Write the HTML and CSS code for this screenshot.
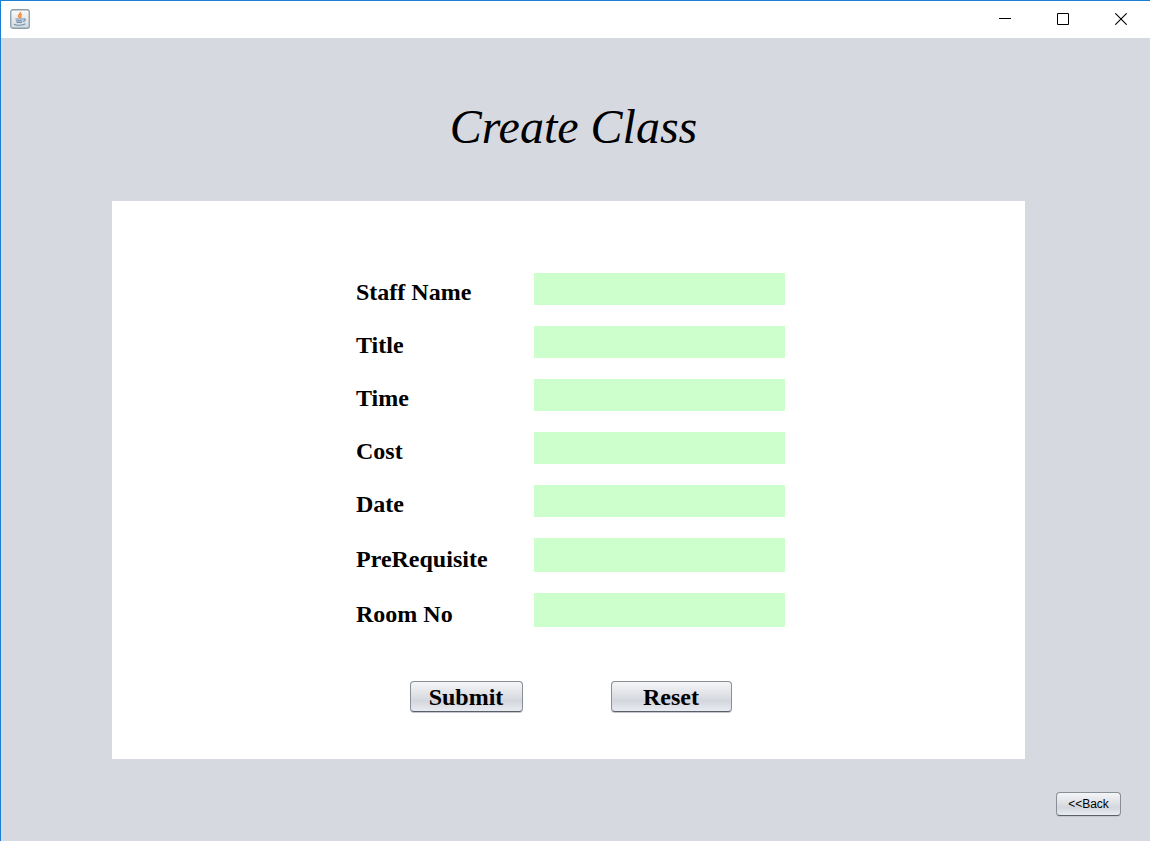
FILE: index.html
```html
<!DOCTYPE html>
<html lang="en">
<head>
<meta charset="utf-8">
<title>Create Class</title>
<link rel="stylesheet" href="styles.css">
</head>
<body>
<div class="window">
  <header class="titlebar">
    <svg class="app-icon" width="20" height="20" viewBox="0 0 20 20" aria-hidden="true">
      <defs>
        <linearGradient id="tile" x1="0" y1="0" x2="0" y2="1">
          <stop offset="0" stop-color="#fafafa"/>
          <stop offset="1" stop-color="#d3dae0"/>
        </linearGradient>
      </defs>
      <rect x="0.75" y="0.75" width="18.5" height="18.5" rx="2" fill="url(#tile)" stroke="#8b9dab" stroke-width="1.300"/>
      <path d="M10.500 3c.8 1.600-2.600 2.700-2 4.200.2.700 1 1.200 1.300 1.800M12 5.400c-1.500.6-2 1.400-1.300 2.200.4.500.1 1-.3 1.300" fill="none" stroke="#ee8b3c" stroke-width="1.500"/>
      <path d="M5.300 10h8M6 11.800h6.500M6.600 13.500h5.400M13.300 10c2.800-.8 2.500 1.900-.2 2.600M4 15.200c2 1.500 9 1.400 11.500-.4" fill="none" stroke="#6c8fae" stroke-width="1.200"/>
    </svg>
    <div class="window-controls">
      <button class="window-button" type="button" aria-label="Minimize">
        <svg width="12" height="12" viewBox="0 0 12 12" shape-rendering="crispEdges"><path d="M0 5.500h12" stroke="#000"/></svg>
      </button>
      <button class="window-button" type="button" aria-label="Maximize">
        <svg width="12" height="12" viewBox="0 0 12 12"><path d="M.5.500h11v11H.5z" fill="none" stroke="#000"/></svg>
      </button>
      <button class="window-button" type="button" aria-label="Close">
        <svg width="12" height="12" viewBox="0 0 12 12"><path d="M.3.300l11.400 11.400M11.700.300L.3 11.700" stroke="#000" stroke-width="1.100"/></svg>
      </button>
    </div>
  </header>
  <main class="content">
    <h1 class="heading">Create Class</h1>
    <form class="panel">
      <div class="fields">
        <label class="label" for="staff">Staff Name</label><input class="field" id="staff" type="text">
        <label class="label" for="title">Title</label><input class="field" id="title" type="text">
        <label class="label" for="time">Time</label><input class="field" id="time" type="text">
        <label class="label" for="cost">Cost</label><input class="field" id="cost" type="text">
        <label class="label" for="date">Date</label><input class="field" id="date" type="text">
        <label class="label" for="prereq">PreRequisite</label><input class="field" id="prereq" type="text">
        <label class="label" for="room">Room No</label><input class="field" id="room" type="text">
      </div>
      <div class="actions">
        <button class="button button-submit" type="submit">Submit</button>
        <button class="button button-reset" type="reset">Reset</button>
      </div>
    </form>
    <footer class="footer">
      <button class="button button-back" type="button">&lt;&lt;Back</button>
    </footer>
  </main>
</div>
</body>
</html>
```

FILE: styles.css
```css
* {
  box-sizing: border-box;
}

body {
  margin: 0;
  color: #000;
  background: #d6d9e0;
  font-family: "Liberation Serif", "Times New Roman", serif;
}

.window {
  display: flex;
  flex-direction: column;
  min-height: 100vh;
  border-top: 1px solid #1a7fd4;
  border-left: 1px solid #1a7fd4;
}

.titlebar {
  display: flex;
  align-items: center;
  justify-content: space-between;
  height: 37px;
  padding: 0 0 2px 9px;
  background: #fff;
}

.window-controls {
  display: flex;
}

.window-button {
  display: grid;
  place-items: center;
  width: 58px;
  height: 34px;
  padding: 0;
  border: 0;
  background: transparent;
}

.content {
  display: flex;
  flex: 1;
  flex-direction: column;
}

.heading {
  margin: 61px 0 46px;
  padding-right: 4px;
  font-size: 48px;
  font-style: italic;
  font-weight: 400;
  line-height: 56px;
  text-align: center;
}

.panel {
  margin: 0 125px 0 111px;
  padding: 72px 0 47px 4px;
  background: #fff;
}

.fields {
  display: grid;
  grid-template-columns: 178px 251px;
  grid-template-rows: repeat(5, 32px) repeat(2, 34px);
  row-gap: 21px;
  justify-content: center;
}

.label {
  align-self: end;
  padding: 7px 0 1px;
  font-size: 24px;
  font-weight: 700;
  line-height: 24px;
}

.field {
  width: 100%;
  height: 100%;
  padding: 0 8px;
  border: 0;
  background: #cfc;
  font: 20px "Liberation Serif", "Times New Roman", serif;
}

.actions {
  display: flex;
  justify-content: center;
  gap: 88px;
  margin-top: 54px;
}

.button {
  padding: 0;
  border: 1px solid #8a8f96;
  border-bottom-color: #5a5f68;
  border-radius: 4px;
  color: #000;
  background: linear-gradient(#f4f5f7, #dfe1e6 45%, #d3d6dd 65%, #e9ebf3);
  box-shadow: 0 1px 0 #c4c7cd;
}

.button-submit,
.button-reset {
  height: 31px;
  font: 700 24px/28px "Liberation Serif", "Times New Roman", serif;
}

.button-submit {
  width: 113px;
}

.button-reset {
  width: 121px;
}

.footer {
  display: flex;
  justify-content: flex-end;
  margin-top: auto;
  padding: 24px 29px 25px;
}

.button-back {
  width: 65px;
  height: 24px;
  font: 12px "Liberation Sans", Arial, sans-serif;
}
```
